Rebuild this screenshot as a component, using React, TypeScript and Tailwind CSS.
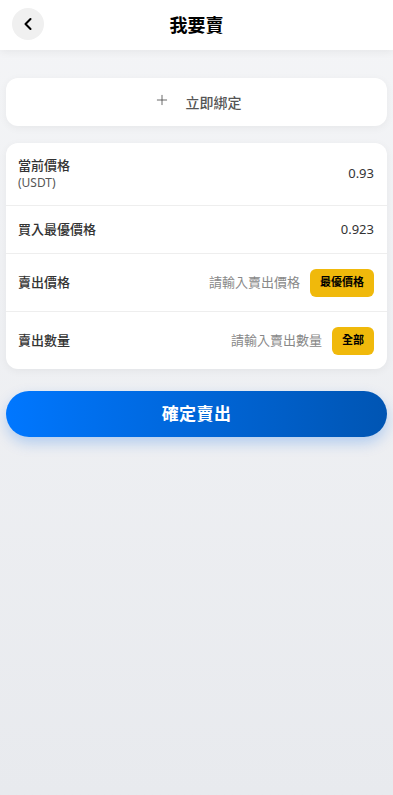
import { ChevronLeft, Plus } from "lucide-react";

const FONT = { fontFamily: '"Noto Sans", "Noto Sans CJK TC", sans-serif' };

export default function App() {
  return (
    <div
      className="min-h-[795px] w-full bg-gradient-to-b from-[#f4f5f7] to-[#e8eaee]"
      style={FONT}
    >
      <header className="relative flex h-[50px] items-center justify-center bg-white shadow-[0_2px_8px_rgba(0,0,0,0.06)]">
        <button className="absolute left-3 top-2 flex h-8 w-8 items-center justify-center rounded-full bg-[#f0f0f0]">
          <ChevronLeft size={20} strokeWidth={2.5} className="text-black" />
        </button>
        <h1 className="text-[18px] font-bold text-black">我要賣</h1>
      </header>

      <div className="px-[6px] pt-7">
        <div className="flex h-12 items-center justify-center gap-4 rounded-xl bg-white pl-[2px] shadow-[0_2px_8px_rgba(0,0,0,0.05)]">
          <Plus size={16} strokeWidth={1.2} className="-mt-1 text-[#444]" />
          <span className="text-[14px] font-medium text-[#555]">立即綁定</span>
        </div>

        <div className="mt-[17px] rounded-xl bg-white shadow-[0_2px_8px_rgba(0,0,0,0.05)]">
          <div className="flex h-[63px] items-center justify-between border-b border-[#eeeeee] pl-3 pr-[13px]">
            <div className="leading-[18px] text-[#333]">
              <div className="text-[13px] font-medium">當前價格</div>
              <div className="text-[12px] text-[#555]">(USDT)</div>
            </div>
            <span className="text-[13px] text-[#333]">0.93</span>
          </div>
          <div className="flex h-12 items-center justify-between border-b border-[#eeeeee] pl-3 pr-[13px]">
            <span className="text-[13px] font-medium text-[#333]">買入最優價格</span>
            <span className="text-[13px] text-[#333]">0.923</span>
          </div>
          <div className="flex h-[58px] items-center justify-between border-b border-[#eeeeee] pl-3 pr-[13px]">
            <span className="text-[13px] font-medium text-[#333]">賣出價格</span>
            <div className="flex items-center gap-[10px]">
              <span className="text-[13px] text-[#888]">請輸入賣出價格</span>
              <button className="h-7 w-16 rounded-md bg-[#f0b90b] text-[11px] font-bold text-black">
                最優價格
              </button>
            </div>
          </div>
          <div className="flex h-[57px] items-center justify-between pl-3 pr-[13px]">
            <span className="text-[13px] font-medium text-[#333]">賣出數量</span>
            <div className="flex items-center gap-[10px]">
              <span className="text-[13px] text-[#888]">請輸入賣出數量</span>
              <button className="h-7 w-[42px] rounded-md bg-[#f0b90b] text-[11px] font-bold text-black">
                全部
              </button>
            </div>
          </div>
        </div>

        <button className="mt-[22px] flex h-[46px] w-full items-center justify-center rounded-full bg-gradient-to-r from-[#0077ff] to-[#0055b3] text-[17px] font-bold tracking-wide text-white shadow-[0_6px_14px_rgba(0,102,230,0.25)]">
          確定賣出
        </button>
      </div>
    </div>
  );
}
